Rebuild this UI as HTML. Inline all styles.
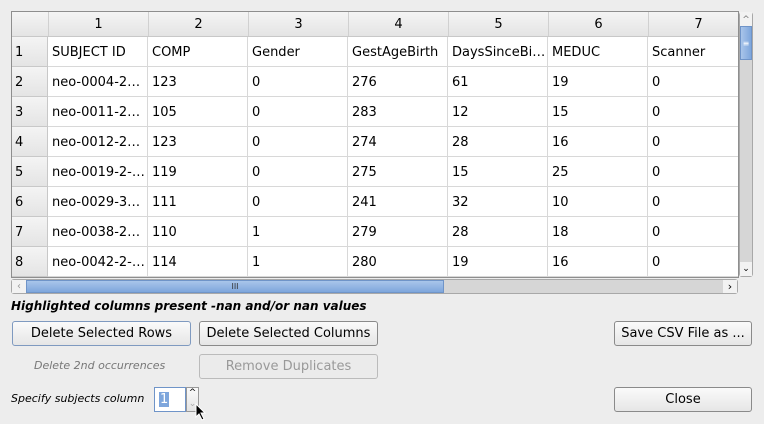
<!DOCTYPE html>
<html><head><style>
body{margin:0;width:764px;height:424px;background:#ededed;font-family:"DejaVu Sans","Liberation Sans",sans-serif;font-size:13px;color:#000;position:relative;overflow:hidden}
.a{position:absolute}
.tbl{left:11px;top:11px;width:726px;height:265px;border:1px solid #8e8e8e;background:#fff;overflow:hidden}
.hd{position:absolute;background:linear-gradient(#f4f4f4,#e4e4e4);}
.cell{position:absolute;height:30px;line-height:31px;border-right:1px solid #d8d8d8;border-bottom:1px solid #d8d8d8;box-sizing:border-box;padding-left:4px;white-space:nowrap;overflow:hidden}
.btn{position:absolute;box-sizing:border-box;border:1px solid #8a8a8a;border-radius:3px;background:linear-gradient(#fafafa,#e6e6e6);text-align:center;line-height:23px;font-size:13px}
</style></head><body>
<div class="a tbl" id="t"></div>
<script>
var t=document.getElementById('t');
var data=[["SUBJECT ID","COMP","Gender","GestAgeBirth","DaysSinceBi…","MEDUC","Scanner"],
["neo-0004-2…","123","0","276","61","19","0"],
["neo-0011-2…","105","0","283","12","15","0"],
["neo-0012-2…","123","0","274","28","16","0"],
["neo-0019-2-…","119","0","275","15","25","0"],
["neo-0029-3…","111","0","241","32","10","0"],
["neo-0038-2…","110","1","279","28","18","0"],
["neo-0042-2-…","114","1","280","19","16","0"]];
var h='<div class="hd" style="left:0;top:0;width:726px;height:24px;border-bottom:1px solid #c8c8c8"></div>';
var x=36;
for(var c=0;c<7;c++){h+='<div class="a" style="left:'+x+'px;top:0;width:100px;height:24px;line-height:26px;text-align:center;border-left:1px solid #d0d0d0;box-sizing:border-box">'+(c+1)+'</div>';x+=100;}
for(var r=0;r<8;r++){var y=25+r*30;
h+='<div class="hd" style="left:0;top:'+y+'px;height:29px;border-bottom:1px solid #c8c8c8;border-right:1px solid #c8c8c8;line-height:31px;padding-left:3px;width:32px">'+(r+1)+'</div>';
x=36;for(var c=0;c<7;c++){h+='<div class="cell" style="left:'+x+'px;top:'+y+'px;width:100px">'+data[r][c]+'</div>';x+=100;}}
t.innerHTML=h;
</script>
<div class="a" style="left:739px;top:12px;width:14px;height:265px;background:#d6d6d6;border:1px solid #a8a8a8;box-sizing:border-box;border-radius:3px"></div>
<div class="a" style="left:740px;top:12px;width:12px;height:14px;background:#f2f2f2;font-size:9px;text-align:center;color:#777;line-height:16px">^</div>
<div class="a" style="left:740px;top:26px;width:12px;height:34px;background:linear-gradient(90deg,#a9c5ea,#7ea6dc);border:1px solid #6f94c8;box-sizing:border-box;font-size:8px;color:#fff;text-align:center;line-height:34px">≡</div>
<div class="a" style="left:740px;top:262px;width:12px;height:14px;background:#f2f2f2;font-size:9px;text-align:center;line-height:14px">⌄</div>
<div class="a" style="left:11px;top:279px;width:727px;height:15px;background:#d6d6d6;border:1px solid #a8a8a8;box-sizing:border-box;border-radius:3px"></div>
<div class="a" style="left:12px;top:280px;width:14px;height:13px;background:#f2f2f2;font-size:10px;color:#999;text-align:center;line-height:13px">‹</div>
<div class="a" style="left:26px;top:280px;width:418px;height:13px;background:linear-gradient(#a9c5ea,#7ea6dc);border:1px solid #6f94c8;box-sizing:border-box;font-size:8px;color:#333;text-align:center;line-height:11px">III</div>
<div class="a" style="left:723px;top:280px;width:14px;height:13px;background:#f2f2f2;font-size:11px;text-align:center;line-height:13px">›</div>
<div class="a" style="left:11px;top:299px;font-weight:bold;font-style:italic;font-size:12px">Highlighted columns present -nan and/or nan values</div>
<div class="btn" style="left:12px;top:321px;width:179px;height:25px;border-color:#7f9ac0">Delete Selected Rows</div>
<div class="btn" style="left:199px;top:321px;width:179px;height:25px">Delete Selected Columns</div>
<div class="btn" style="left:614px;top:321px;width:138px;height:25px">Save CSV File as ...</div>
<div class="a" style="left:34px;top:359px;font-style:italic;font-size:11px;color:#777">Delete 2nd occurrences</div>
<div class="btn" style="left:199px;top:354px;width:179px;height:25px;color:#999;border-color:#bbb;background:#ebebeb">Remove Duplicates</div>
<div class="a" style="left:11px;top:392px;font-style:italic;font-size:11px">Specify subjects column</div>
<div class="a" style="left:154px;top:387px;width:32px;height:25px;background:#fff;border:1px solid #6f94c8;box-sizing:border-box"><span style="position:absolute;left:4px;top:4px;background:#7ea6dc;color:#fff;line-height:15px;padding:0 1px">1</span></div>
<div class="a" style="left:186px;top:387px;width:13px;height:25px;background:linear-gradient(#fafafa,#e4e4e4);border:1px solid #999;box-sizing:border-box;font-size:9px;text-align:center;line-height:11px">^<br><span style="color:#aaa">⌄</span></div>
<svg class="a" style="left:195px;top:403px" width="12" height="18"><path d="M1 1 L1 14 L4 11 L7 17 L9 16 L6 10 L10 10 Z" fill="#000" stroke="#fff" stroke-width="1"/></svg>
<div class="btn" style="left:614px;top:387px;width:138px;height:25px">Close</div>
</body></html>
